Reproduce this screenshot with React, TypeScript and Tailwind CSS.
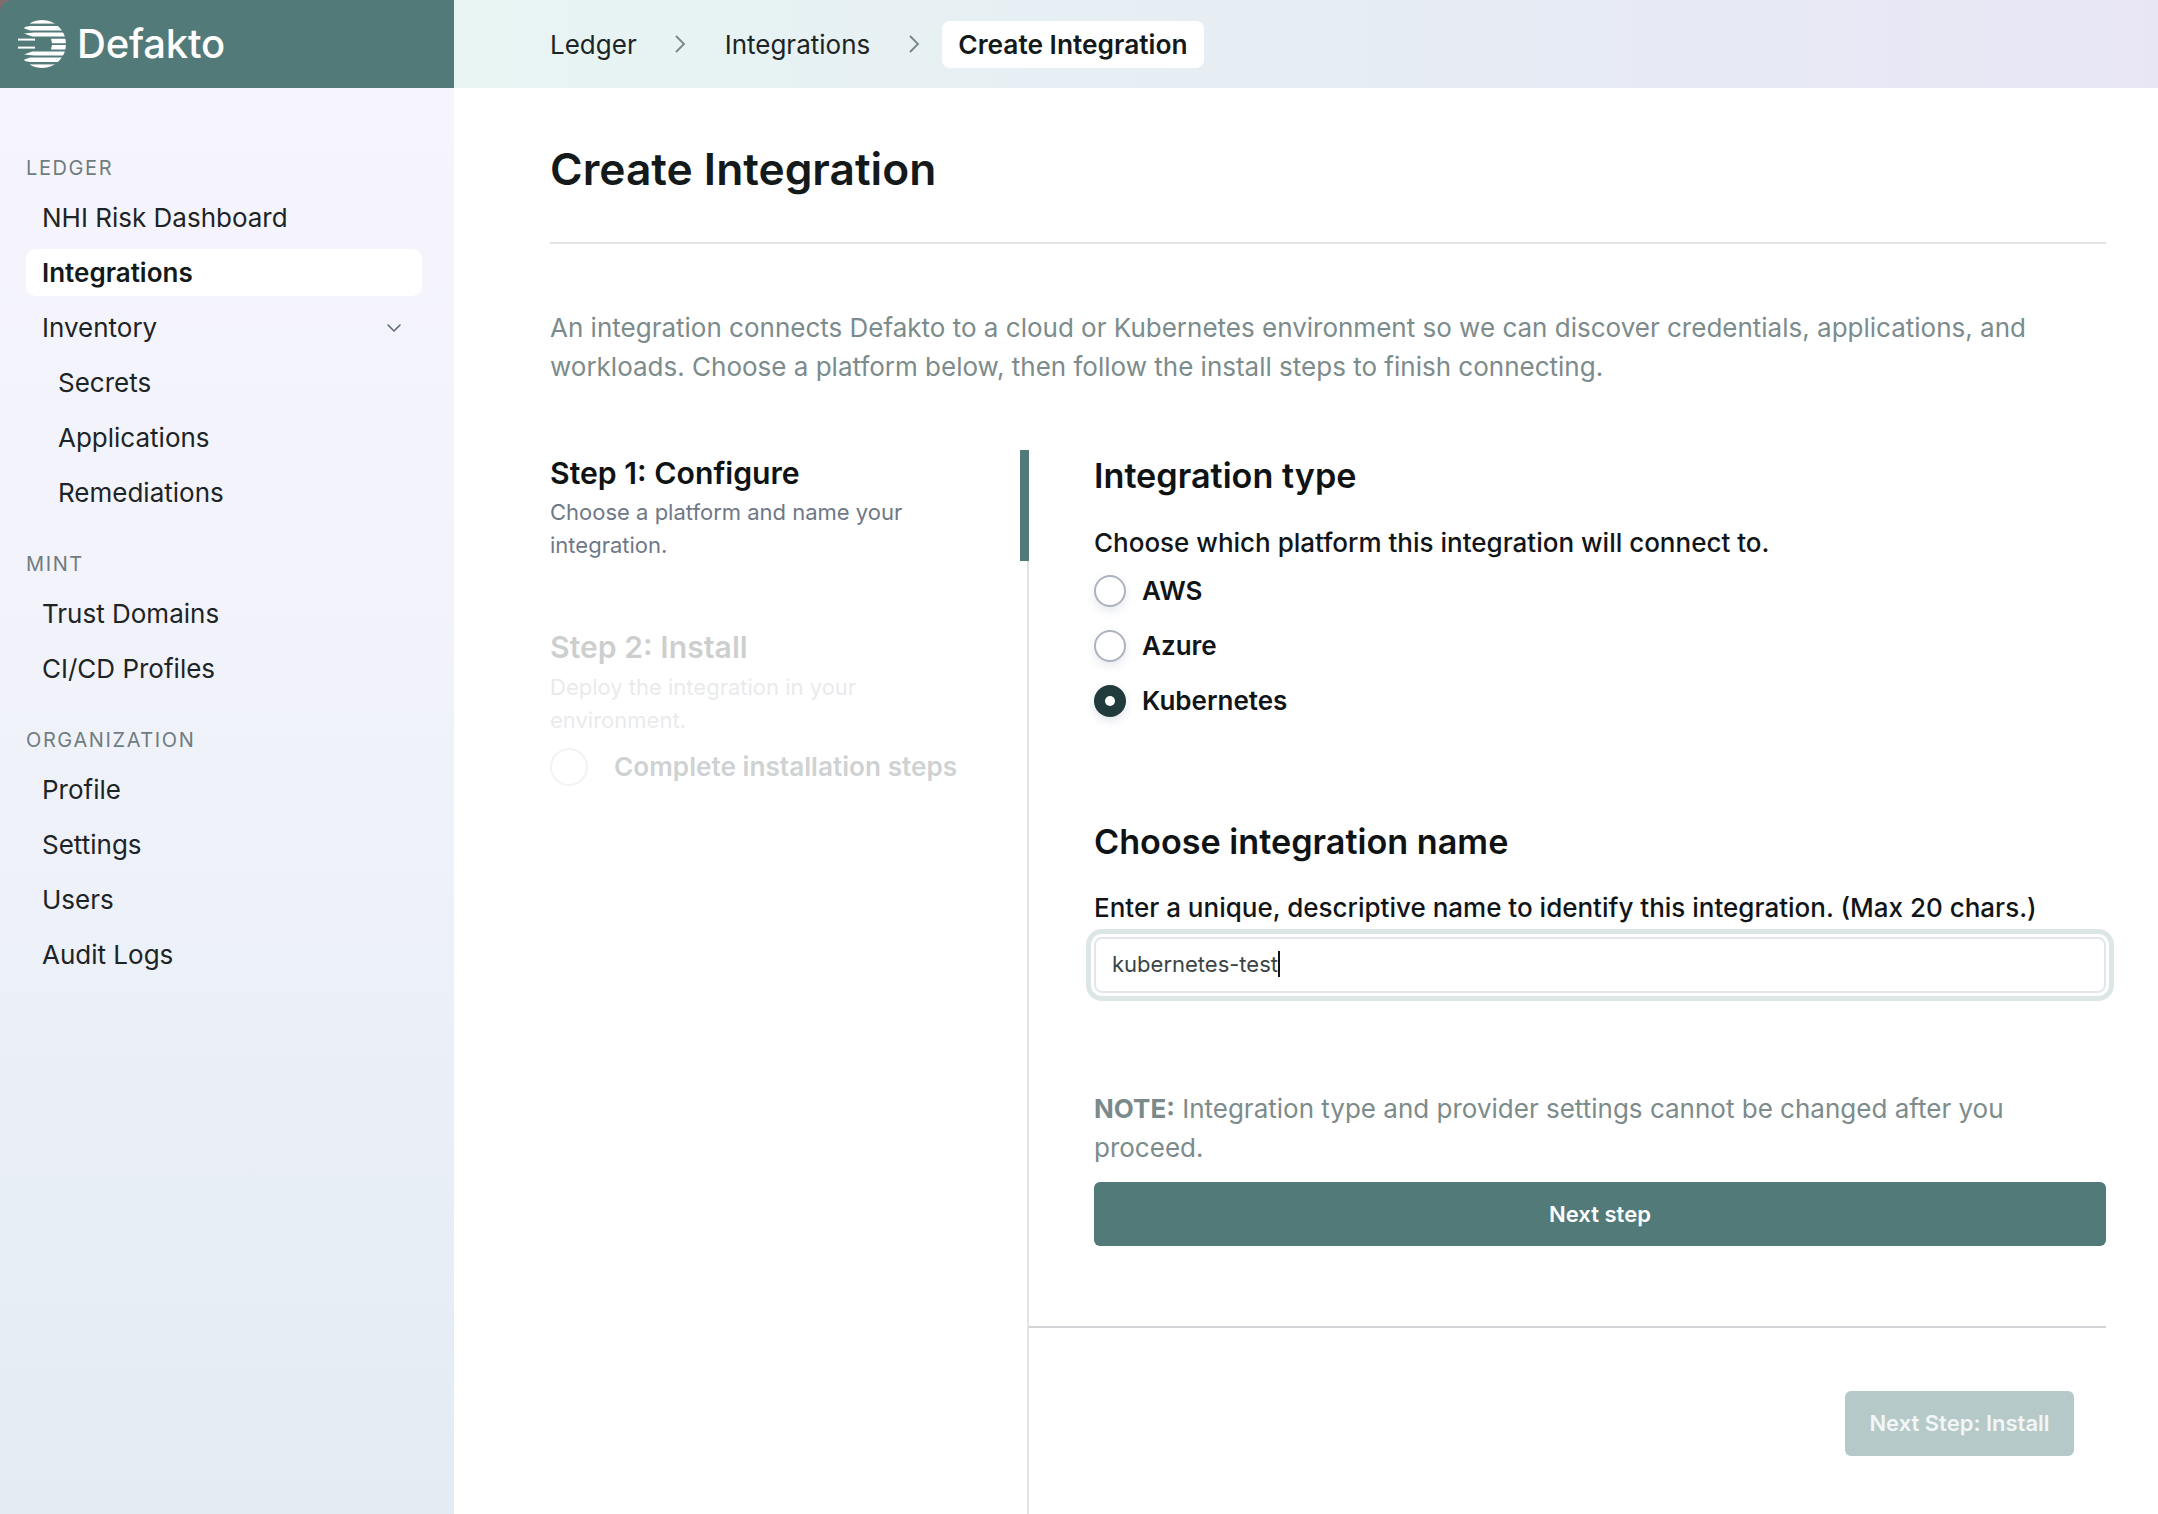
import React from "react";
import { ChevronDown } from "lucide-react";

function Logo() {
  return (
    <svg width="48" height="48" viewBox="0 0 48 48" className="shrink-0">
      <defs>
        <clipPath id="disk"><circle cx="24" cy="24" r="24" /></clipPath>
      </defs>
      <g clipPath="url(#disk)" fill="#fff">
        <rect x="12" y="0" width="26" height="3.6" />
        <path d="M4 7.6L12 6h36v4.6H12z" />
        <path d="M6 13.4L16 12.6h32v4H14z" />
        <path d="M33 18.8h15v4.4H34z" />
        <path d="M34 25h14v4.4H33z" />
        <path d="M6 34.6L16 35.4h32v-4H14z" />
        <path d="M4 40.4L12 42h36v-4.6H12z" />
        <rect x="12" y="44.4" width="26" height="3.6" />
      </g>
      <rect x="0" y="18.6" width="17" height="2" fill="#fff" />
      <rect x="0" y="26.6" width="17" height="2" fill="#fff" />
    </svg>
  );
}

function Separator({ className = "" }: { className?: string }) {
  return (
    <svg width="12" height="18" viewBox="0 0 12 18" fill="none" stroke="#7a8588" strokeWidth="1.8" className={"shrink-0 " + className}>
      <path d="M2 1l8 8-8 8" />
    </svg>
  );
}

function SectionLabel({ children, className = "" }: { children: React.ReactNode; className?: string }) {
  return <div className={"h-[22px] pl-[26px] text-[20px] leading-[22px] tracking-[1.6px] text-[#6f7c80] " + className}>{children}</div>;
}

function NavItem({ label, active, sub, chevron }: { label: string; active?: boolean; sub?: boolean; chevron?: boolean }) {
  return (
    <div className={"mx-[26px] mb-[8px] flex h-[47px] w-[396px] items-center justify-between rounded-[10px] pr-[16px] text-[26px] text-[#1d2426] " + (sub ? "pl-[32px] " : "pl-[16px] ") + (active ? "bg-white font-semibold text-[#14191a]" : "")}>
      <span>{label}</span>
      {chevron && <ChevronDown size={24} strokeWidth={1.6} className="text-[#5f6b70]" />}
    </div>
  );
}

function Radio({ label, checked }: { label: string; checked?: boolean }) {
  return (
    <div className="flex h-[55px] items-center gap-[16px]">
      {checked ? (
        <span className="flex size-[32px] items-center justify-center rounded-full bg-[#213b3c] shadow-[0_4px_10px_rgba(60,70,110,0.14)]">
          <span className="size-[10px] rounded-full bg-white" />
        </span>
      ) : (
        <span className="size-[32px] rounded-full border-2 border-[#acb2c0] bg-white shadow-[0_4px_10px_rgba(60,70,110,0.12)]" />
      )}
      <span className="text-[26px] font-semibold leading-none text-[#111517]">{label}</span>
    </div>
  );
}

export default function App() {
  return (
    <div className="flex h-[1514px] w-[2158px] overflow-hidden bg-white font-['Inter',sans-serif]">
      <aside className="flex w-[454px] shrink-0 flex-col bg-gradient-to-b from-[#f7f5fd] via-[#f0f2fa] to-[#e3ecf3]">
        <div className="h-[88px] bg-[#846b6b]">
          <div className="flex h-full items-center gap-[11px] rounded-tl-[12px] bg-[#527a79] pl-[18px]">
            <Logo />
            <span className="text-[40px] font-medium leading-none tracking-[-0.2px] text-white">Defakto</span>
          </div>
        </div>
        <nav className="flex flex-col pt-[69px]">
          <SectionLabel className="mb-[15px]">LEDGER</SectionLabel>
          <NavItem label="NHI Risk Dashboard" />
          <NavItem label="Integrations" active />
          <NavItem label="Inventory" chevron />
          <NavItem label="Secrets" sub />
          <NavItem label="Applications" sub />
          <NavItem label="Remediations" sub />
          <SectionLabel className="mb-[15px] mt-[29px]">MINT</SectionLabel>
          <NavItem label="Trust Domains" />
          <NavItem label="CI/CD Profiles" />
          <SectionLabel className="mb-[15px] mt-[29px]">ORGANIZATION</SectionLabel>
          <NavItem label="Profile" />
          <NavItem label="Settings" />
          <NavItem label="Users" />
          <NavItem label="Audit Logs" />
        </nav>
      </aside>

      <div className="flex min-w-0 flex-1 flex-col">
        <header className="flex h-[88px] items-center bg-gradient-to-r from-[#e8f5f3] via-[#e6edf4] to-[#e8e6f5] pl-[96px] text-[26px] text-[#1d2426]">
          <span>Ledger</span>
          <Separator className="ml-[37px]" />
          <span className="ml-[39px]">Integrations</span>
          <Separator className="ml-[38px]" />
          <span className="ml-[22px] flex h-[47px] items-center rounded-[8px] bg-white px-[16px] pt-[1px] text-[26.3px] font-semibold text-[#14191a]">Create Integration</span>
        </header>

        <main className="flex min-h-0 flex-1 flex-col pl-[96px] pr-[52px]">
          <h1 className="flex h-[156px] items-center border-b-2 border-[#e2e3e3] pt-[8px] text-[44.3px] font-semibold leading-none text-[#14191a]">Create Integration</h1>
          <p className="mt-[65px] text-[26px] leading-[38.5px] text-[#7c8b8b]">
            An integration connects Defakto to a cloud or Kubernetes environment so we can discover credentials, applications, and workloads. Choose a platform below, then follow the install steps to finish connecting.
          </p>

          <div className="mt-[64px] flex min-h-0 flex-1">
            <div className="relative w-[479px] shrink-0 border-r-2 border-[#e2e3e3] pr-[40px]">
              <div className="absolute -right-[2px] top-0 h-[111px] w-[9px] bg-[#527a79]" />
              <h2 className="mt-[5px] text-[30.2px] font-semibold leading-[36px] text-[#0f1314]">Step 1: Configure</h2>
              <p className="mt-[5px] text-[22px] leading-[33px] text-[#6f7887]">Choose a platform and name your integration.</p>
              <div className="opacity-25">
                <h2 className="mt-[67px] text-[30.2px] font-semibold leading-[36px] text-[#0f1314] opacity-80">Step 2: Install</h2>
                <p className="mt-[6px] text-[22px] leading-[33px] text-[#6f7887] opacity-60">Deploy the integration in your environment.</p>
              </div>
              <div className="mt-[10px] flex items-center gap-[26px]">
                <span className="size-[38px] rounded-full border-2 border-[#f3f3f3]" />
                <span className="text-[26.2px] font-semibold text-[#cfd2d2]">Complete installation steps</span>
              </div>
            </div>

            <div className="flex min-w-0 flex-1 flex-col">
              <div className="pl-[65px]">
                <h2 className="mt-[6px] text-[34.2px] font-semibold leading-[40px] text-[#0f1314]">Integration type</h2>
                <p className="mt-[28px] text-[26px] font-medium leading-[38px] text-[#111517]">Choose which platform this integration will connect to.</p>
                <div className="mt-[1px] flex flex-col">
                  <Radio label="AWS" />
                  <Radio label="Azure" />
                  <Radio label="Kubernetes" checked />
                </div>
                <h2 className="mt-[94px] text-[34.2px] font-semibold leading-[40px] text-[#0f1314]">Choose integration name</h2>
                <p className="mt-[27px] text-[26px] font-medium leading-[38px] text-[#111517]">Enter a unique, descriptive name to identify this integration. (Max 20 chars.)</p>
                <div className="mt-[10px] flex h-[56px] items-center rounded-[8px] border-2 border-[#e3e7ec] bg-white px-[16px] pb-[2px] text-[22px] text-[#3a4446] shadow-[0_0_0_3px_#fff,0_0_0_8px_#dce6e6]">
                  <span>kubernetes-test</span>
                  <span className="h-[26px] w-[2px] bg-[#111517]" />
                </div>
                <p className="mt-[97px] text-[26px] leading-[38.5px] text-[#7c8b8b]"><strong className="font-bold text-[#7a8a8a]">NOTE:</strong> Integration type and provider settings cannot be changed after you proceed.</p>
                <button className="mt-[15px] flex h-[64px] w-full items-center justify-center rounded-[6px] bg-[#527a79] text-[22px] font-semibold text-white">Next step</button>
              </div>
              <div className="mt-[80px] border-t-2 border-[#d2d4d8]" />
              <div className="flex justify-end pr-[32px] pt-[63px]">
                <button className="flex h-[65px] w-[229px] items-center justify-center rounded-[6px] bg-[#b6c9c9] text-[22px] font-semibold text-[#f2f6f6]">Next Step: Install</button>
              </div>
            </div>
          </div>
        </main>
      </div>
    </div>
  );
}
